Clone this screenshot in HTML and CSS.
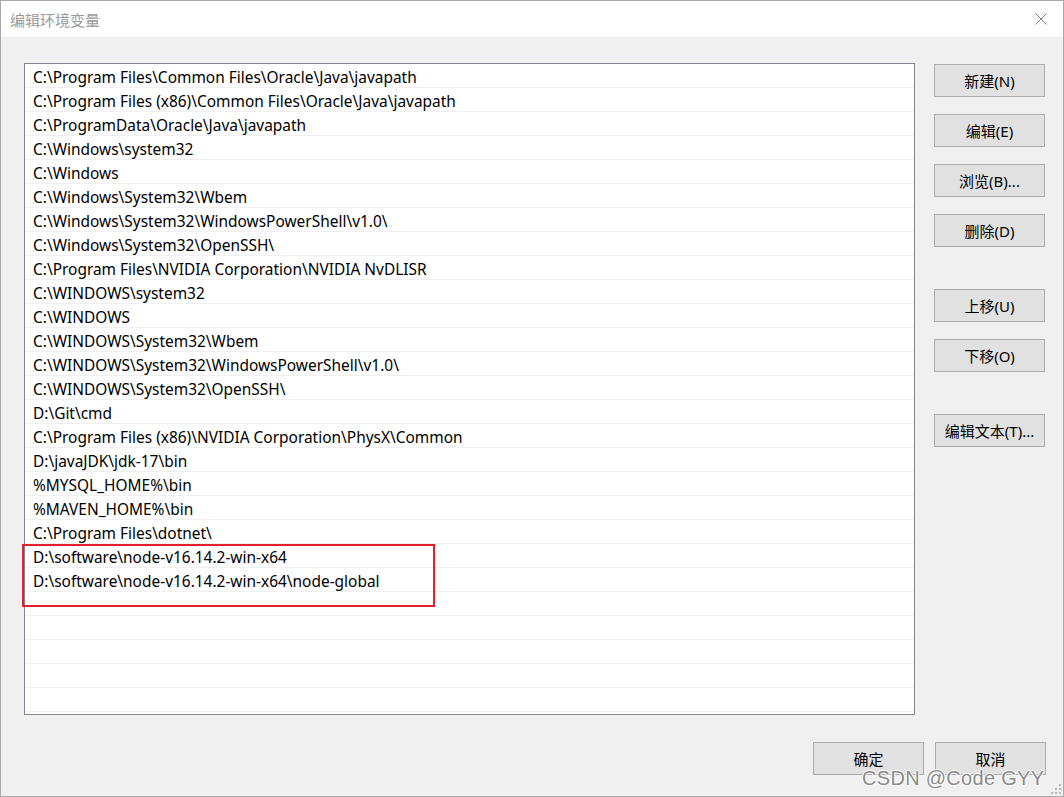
FILE: index.html
```html
<!DOCTYPE html>
<html>
<head>
<meta charset="utf-8">
<link rel="stylesheet" href="styles.css">
</head>
<body>
<div class="window">
  <div class="titlebar">
    <span class="title">编辑环境变量</span>
    <svg class="close" width="12" height="12" viewBox="0 0 12 12"><path d="M0.5 0.5L11.5 11.5M11.5 0.5L0.5 11.5" stroke="#7a7a7a" stroke-width="1" fill="none"/></svg>
  </div>
  <div class="content">
    <div class="list">
      <div class="row">C:\Program Files\Common Files\Oracle\Java\javapath</div>
      <div class="row">C:\Program Files (x86)\Common Files\Oracle\Java\javapath</div>
      <div class="row">C:\ProgramData\Oracle\Java\javapath</div>
      <div class="row">C:\Windows\system32</div>
      <div class="row">C:\Windows</div>
      <div class="row">C:\Windows\System32\Wbem</div>
      <div class="row">C:\Windows\System32\WindowsPowerShell\v1.0\</div>
      <div class="row">C:\Windows\System32\OpenSSH\</div>
      <div class="row">C:\Program Files\NVIDIA Corporation\NVIDIA NvDLISR</div>
      <div class="row">C:\WINDOWS\system32</div>
      <div class="row">C:\WINDOWS</div>
      <div class="row">C:\WINDOWS\System32\Wbem</div>
      <div class="row">C:\WINDOWS\System32\WindowsPowerShell\v1.0\</div>
      <div class="row">C:\WINDOWS\System32\OpenSSH\</div>
      <div class="row">D:\Git\cmd</div>
      <div class="row">C:\Program Files (x86)\NVIDIA Corporation\PhysX\Common</div>
      <div class="row">D:\javaJDK\jdk-17\bin</div>
      <div class="row">%MYSQL_HOME%\bin</div>
      <div class="row">%MAVEN_HOME%\bin</div>
      <div class="row">C:\Program Files\dotnet\</div>
      <div class="row">D:\software\node-v16.14.2-win-x64</div>
      <div class="row">D:\software\node-v16.14.2-win-x64\node-global</div>
      <div class="row"></div>
      <div class="row"></div>
      <div class="row"></div>
      <div class="row"></div>
      <div class="row"></div>
      <div class="row"></div>
    </div>
    <div class="side">
      <div class="group">
        <div class="btn">新建(N)</div>
        <div class="btn">编辑(E)</div>
        <div class="btn">浏览(B)...</div>
        <div class="btn">删除(D)</div>
      </div>
      <div class="group">
        <div class="btn">上移(U)</div>
        <div class="btn">下移(O)</div>
      </div>
      <div class="group">
        <div class="btn">编辑文本(T)...</div>
      </div>
    </div>
  </div>
  <div class="footer">
    <div class="btn">确定</div>
    <div class="btn">取消</div>
  </div>
  <div class="highlight"></div>
  <div class="watermark">CSDN @Code GYY</div>
  <svg class="grip" width="12" height="12" viewBox="0 0 12 12">
    <rect x="9" y="1" width="2" height="2" fill="#b8b8b8"/>
    <rect x="5" y="5" width="2" height="2" fill="#b8b8b8"/>
    <rect x="9" y="5" width="2" height="2" fill="#b8b8b8"/>
    <rect x="1" y="9" width="2" height="2" fill="#b8b8b8"/>
    <rect x="5" y="9" width="2" height="2" fill="#b8b8b8"/>
    <rect x="9" y="9" width="2" height="2" fill="#b8b8b8"/>
  </svg>
</div>
</body>
</html>
```
FILE: styles.css
```css
* { box-sizing: border-box; }
html, body { margin: 0; padding: 0; }
body {
  width: 1064px;
  height: 797px;
  overflow: hidden;
  font-family: "Noto Sans", "Noto Sans CJK SC", sans-serif;
  font-size: 15px;
  color: #000;
}
.window {
  position: relative;
  width: 1064px;
  height: 797px;
  background: #f0f0f0;
  border: 1px solid #a9a9a9;
  display: flex;
  flex-direction: column;
}
.titlebar {
  height: 36px;
  background: #fff;
  display: flex;
  align-items: center;
  justify-content: space-between;
  padding: 0 16px 0 9px;
  flex: none;
}
.title {
  font-family: "Noto Sans CJK SC", sans-serif;
  font-size: 15px;
  color: #9a9a9a;
}
.close { display: block; }
.content {
  display: flex;
  padding: 26px 17px 0 23px;
  flex: none;
}
.list {
  width: 891px;
  height: 652px;
  background: #fff;
  border: 1px solid #828790;
  overflow: hidden;
  flex: none;
}
.row {
  height: 24px;
  border-bottom: 1px solid #f0f0f0;
  padding: 3px 0 0 8px;
  line-height: 20px;
  font-size: 15.45px;
  white-space: nowrap;
}
.side {
  margin-left: 19px;
  margin-top: 1px;
  display: flex;
  flex-direction: column;
}
.group {
  display: flex;
  flex-direction: column;
  gap: 17px;
}
.group + .group { margin-top: 42px; }
.btn {
  width: 111px;
  height: 33px;
  background: #e1e1e1;
  border: 1px solid #adadad;
  display: flex;
  align-items: center;
  justify-content: center;
  font-family: "Noto Sans", "Noto Sans CJK SC", sans-serif;
  font-size: 15px;
  white-space: nowrap;
}
.footer {
  display: flex;
  justify-content: flex-end;
  gap: 11px;
  padding: 27px 17px 0 0;
}
.highlight {
  position: absolute;
  left: 21px;
  top: 543px;
  width: 413px;
  height: 63px;
  border: 2px solid #e3202b;
}
.watermark {
  position: absolute;
  left: 861px;
  top: 766px;
  font-family: "Liberation Sans", sans-serif;
  font-size: 20px;
  color: #8a8a8a;
  text-shadow: 1px 0 0 #fff, -1px 0 0 #fff, 0 1px 0 #fff, 0 -1px 0 #fff;
  letter-spacing: 0.3px;
}
.grip {
  position: absolute;
  right: 1px;
  bottom: 1px;
}
```
